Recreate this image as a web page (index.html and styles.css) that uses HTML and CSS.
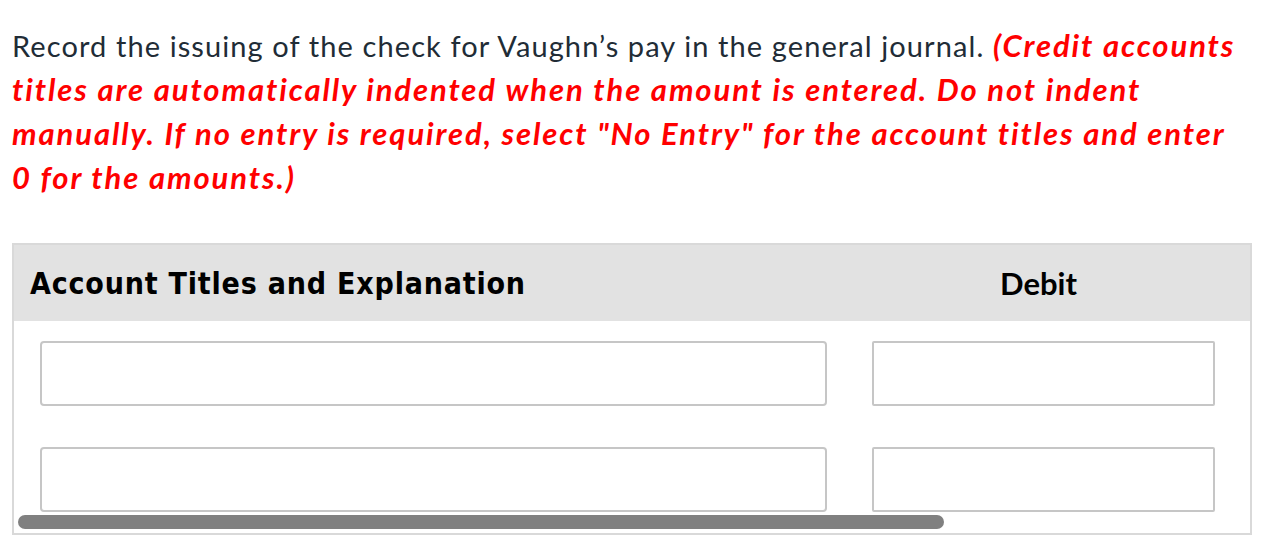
FILE: index.html
```html
<!DOCTYPE html>
<html lang="en">
<head>
    <meta charset="UTF-8">
    <meta name="viewport" content="width=device-width, initial-scale=1.0">
    <title>Journal Entry</title>
    <link rel="stylesheet" href="styles.css">
</head>
<body>
    <div class="container">
        <p class="prompt">
            Record the issuing of the check for Vaughn’s pay in the general journal.
            <em class="note">(Credit accounts titles are automatically indented when the amount is entered. Do not indent manually. If no entry is required, select "No Entry" for the account titles and enter 0 for the amounts.)</em>
        </p>

        <div class="journal">
            <div class="journal-inner">
                <div class="journal-head">
                    <div class="head-title">Account Titles and Explanation</div>
                    <div class="head-amount">Debit</div>
                </div>

                <div class="journal-body">
                    <div class="journal-row">
                        <input type="text" class="field field-title">
                        <input type="text" class="field field-amount">
                    </div>
                    <div class="journal-row">
                        <input type="text" class="field field-title">
                        <input type="text" class="field field-amount">
                    </div>
                </div>
            </div>
            <div class="scroll-track">
                <div class="scroll-thumb"></div>
            </div>
        </div>
    </div>
</body>
</html>
```

FILE: styles.css
```css
body {
    margin: 0;
    padding: 0;
    background-color: #fff;
    font-family: Lato, "Open Sans", sans-serif;
    color: #212c36;
}

.container {
    padding: 24px 18px 0 12px;
}

.prompt {
    margin: 0 16px 0 0;
    font-size: 29px;
    line-height: 44px;
    letter-spacing: 1.1px;
    font-variant-ligatures: none;
}

.note {
    color: #ff0000;
    font-size: 31px;
    line-height: 30px;
    font-weight: bold;
    font-style: italic;
    letter-spacing: 1.9px;
}

.journal {
    margin-top: 43px;
    border: 2px solid #d9d9d9;
    overflow: hidden;
}

.journal-head {
    display: grid;
    grid-template-columns: 797px 343px;
    column-gap: 45px;
    align-items: center;
    height: 76px;
    padding-left: 16px;
    background-color: #e2e2e2;
    color: #000;
}

.head-title {
    font-family: "DejaVu Sans", Verdana, sans-serif;
    font-stretch: condensed;
    font-weight: bold;
    font-size: 30px;
    letter-spacing: 0.8px;
}

.head-amount {
    font-family: Lato, sans-serif;
    font-weight: bold;
    font-size: 31px;
    text-align: center;
    padding-right: 10px;
}

.journal-body {
    display: flex;
    flex-direction: column;
    gap: 41px;
    padding: 20px 0 0 26px;
}

.journal-row {
    display: grid;
    grid-template-columns: 787px 343px;
    column-gap: 45px;
}

.field {
    box-sizing: border-box;
    height: 65px;
    margin: 0;
    border: 2px solid #c6c6c6;
    border-radius: 4px;
    background: #fff;
    font-size: 24px;
}

.field-amount {
    border-radius: 2px;
}

.scroll-track {
    padding: 3px 0 4px 4px;
}

.scroll-thumb {
    width: 926px;
    height: 14px;
    border-radius: 7px;
    background-color: #808080;
}
```
